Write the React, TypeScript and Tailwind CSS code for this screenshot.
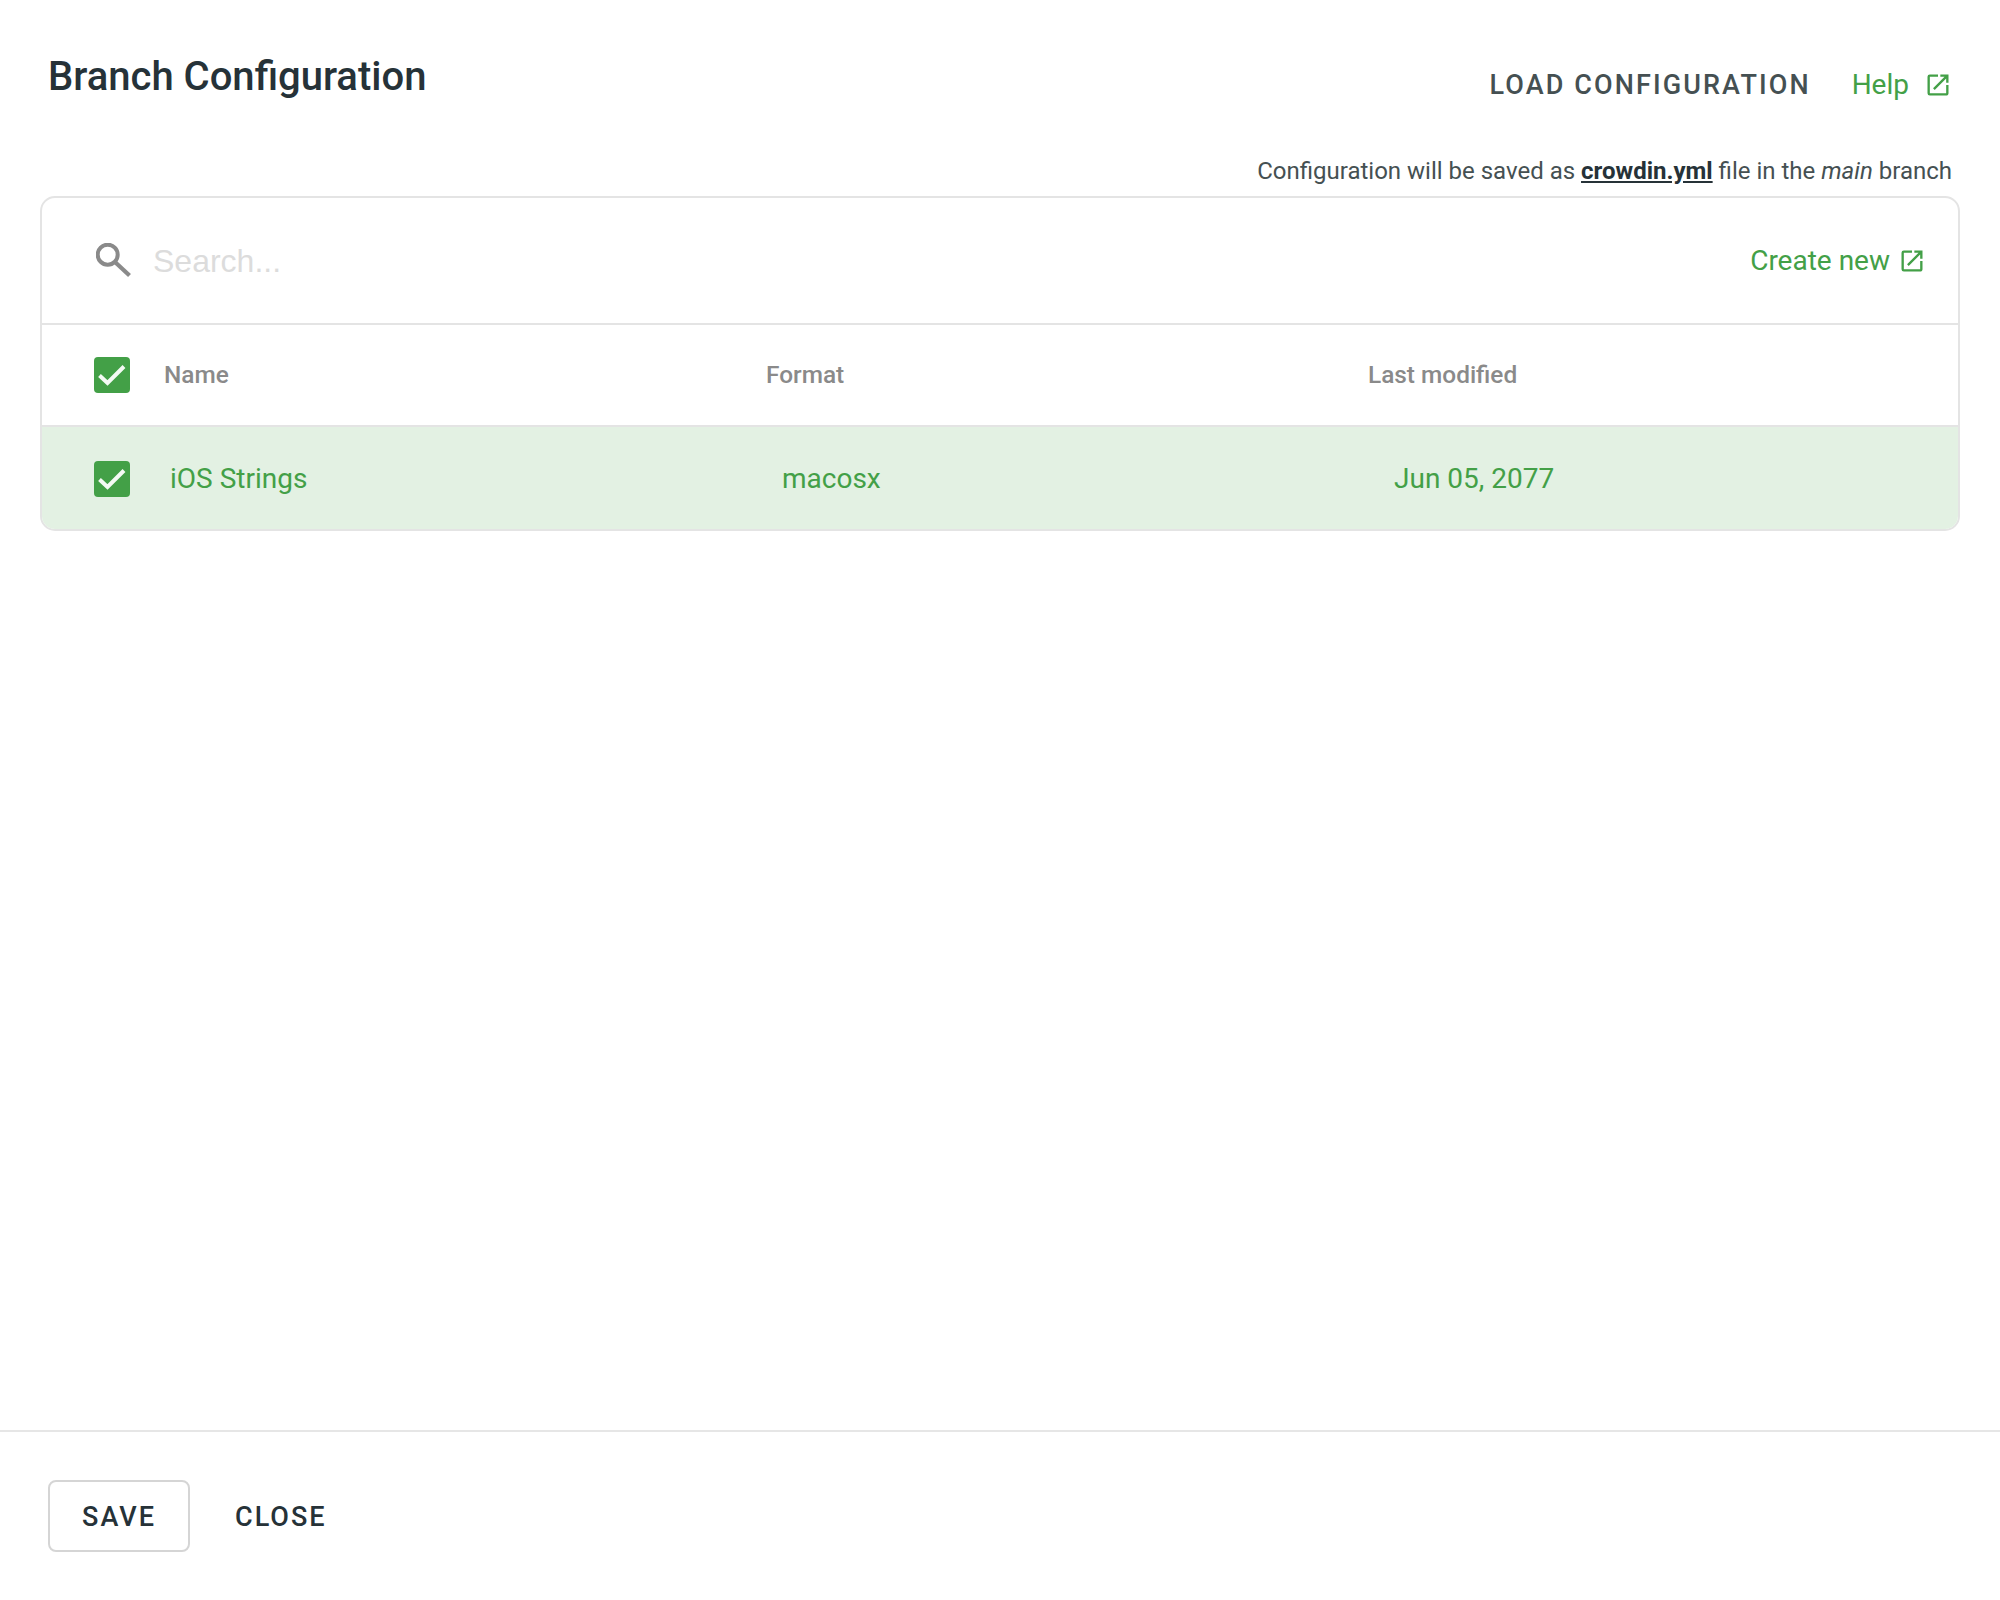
import React from "react";

const font = { fontFamily: "Roboto, sans-serif" };

function ExtLink({ className }: { className: string }) {
  return (
    <svg viewBox="0 0 24 24" className={className} fill="currentColor">
      <path d="M19 19H5V5h7V3H5a2 2 0 0 0-2 2v14a2 2 0 0 0 2 2h14c1.1 0 2-.9 2-2v-7h-2v7zM14 3v2h3.59l-9.83 9.83 1.41 1.41L19 6.41V10h2V3h-7z" />
    </svg>
  );
}

function Check() {
  return (
    <span className="flex h-[36px] w-[36px] shrink-0 items-center justify-center rounded-[4px] bg-[#43a047]">
      <svg viewBox="0 0 36 36" className="h-[36px] w-[36px]" fill="none" stroke="#f4faf4" strokeWidth="4">
        <path d="M5.5 18.5 L13.5 26 L30 9.5" />
      </svg>
    </span>
  );
}

export default function App() {
  return (
    <div className="flex h-[1600px] w-[2000px] flex-col bg-white font-['Roboto',sans-serif]" style={font}>
      <div className="flex-1">
        <div className="flex items-start justify-between pl-[48px] pr-[48px] pt-[51px]">
          <h1 className="text-[40px] font-medium leading-[52px] text-[#263238]">Branch Configuration</h1>
          <div className="flex items-center pt-[16px]">
            <span className="text-[27px] font-medium leading-[36px] tracking-[2.1px] text-[#455052]">LOAD CONFIGURATION</span>
            <span className="ml-[41px] text-[28px] leading-[36px] text-[#43a047]">Help</span>
            <ExtLink className="ml-[15px] h-[28px] w-[28px] text-[#43a047]" />
          </div>
        </div>
        <p className="mt-[51px] pr-[48px] text-right text-[24px] leading-[34px] text-[#455052]">
          Configuration will be saved as <span className="font-bold text-[#263238] underline">crowdin.yml</span> file in the <em>main</em> branch
        </p>
        <div className="mx-[40px] mt-[8px] overflow-hidden rounded-[15px] border-2 border-[#e4e4e4]">
          <div className="flex h-[127px] items-center border-b-2 border-[#e4e4e4] pl-[54px] pr-[32px]">
            <svg viewBox="0 0 36 36" className="h-[36px] w-[36px] shrink-0" fill="none" stroke="#8a8a8a">
              <circle cx="11.7" cy="11.7" r="10" strokeWidth="4" />
              <path d="M19.5 19.5 L33.5 32.5" strokeWidth="4.2" />
            </svg>
            <span className="ml-[21px] flex-1 font-['Liberation_Sans',sans-serif] text-[32px] text-[#dcdcdc]">Search...</span>
            <span className="text-[28px] text-[#43a047]">Create new</span>
            <ExtLink className="ml-[8px] h-[28px] w-[28px] text-[#43a047]" />
          </div>
          <div className="flex h-[102px] items-center border-b-2 border-[#e4e4e4] pl-[52px]">
            <Check />
            <span className="ml-[34px] w-[602px] text-[24.4px] font-medium text-[#8a8a8a]">Name</span>
            <span className="w-[602px] text-[24.4px] font-medium text-[#8a8a8a]">Format</span>
            <span className="text-[24.4px] font-medium text-[#8a8a8a]">Last modified</span>
          </div>
          <div className="flex h-[102px] items-center bg-[#e3f1e3] pl-[52px] pt-[2px] text-[28px] text-[#43a047]">
            <Check />
            <span className="ml-[40px] w-[612px]">iOS Strings</span>
            <span className="w-[612px]">macosx</span>
            <span>Jun 05, 2077</span>
          </div>
        </div>
      </div>
      <div className="flex h-[170px] items-start gap-[45px] border-t-2 border-[#e6e6e6] pl-[48px] pt-[48px]">
        <button className="h-[72px] w-[142px] rounded-[8px] border-2 border-[#d5d5d5] pt-[2px] text-[27px] font-medium tracking-[2px] text-[#263238]">SAVE</button>
        <button className="h-[72px] pt-[2px] text-[27px] font-medium tracking-[2px] text-[#263238]">CLOSE</button>
      </div>
    </div>
  );
}
